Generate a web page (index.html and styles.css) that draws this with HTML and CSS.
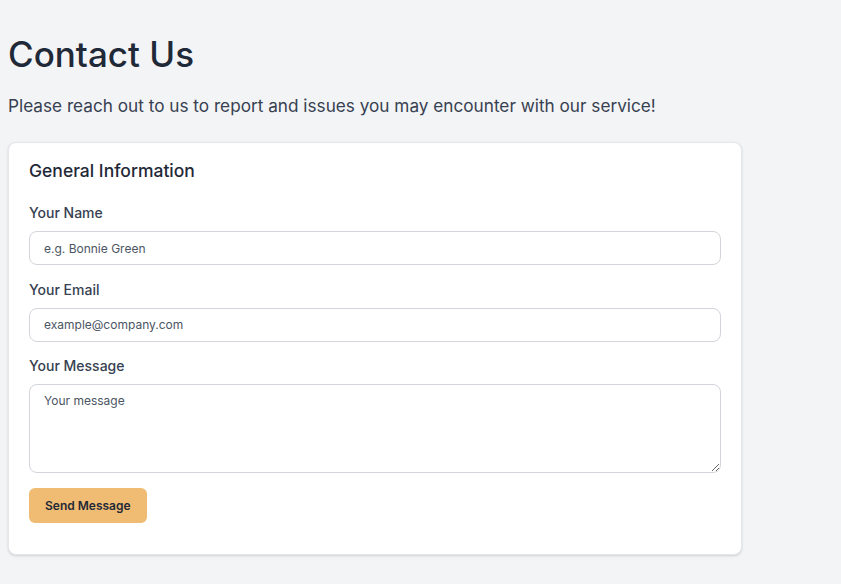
FILE: index.html
```html
<!DOCTYPE html>
<html>

<head>
    <title>Contact Us</title>
    <link rel="stylesheet" href="styles.css">
</head>

<body>
    <h1 class="page-title">Contact Us</h1>
    <p class="page-intro">Please reach out to us to report and issues you may encounter with our service!</p>

    <form class="contact-card" action="/contact" method="post">
        <h2 class="card-title">General Information</h2>

        <div class="field">
            <label for="name">Your Name</label>
            <input type="text" id="name" name="name" placeholder="e.g. Bonnie Green">
        </div>

        <div class="field">
            <label for="email">Your Email</label>
            <input type="email" id="email" name="email" placeholder="example@company.com">
        </div>

        <div class="field">
            <label for="message">Your Message</label>
            <textarea id="message" name="message" placeholder="Your message"></textarea>
        </div>

        <button type="submit" class="send-btn">Send Message</button>
    </form>
</body>

</html>
```

FILE: styles.css
```css
body {
    margin: 0;
    padding: 8px;
    font-family: Inter, "Noto Sans", sans-serif;
    background-color: #f3f4f6;
    color: #1f2937;
}

.page-title {
    margin: 26px 0 18px;
    font-size: 35px;
    line-height: 40px;
    font-weight: 500;
    color: #1f2937;
}

.page-intro {
    margin: 0 0 22px;
    font-size: 17.2px;
    line-height: 28px;
    color: #374151;
}

.contact-card {
    width: 734px;
    box-sizing: border-box;
    background-color: #fff;
    border: 1px solid #e5e7eb;
    border-radius: 8px;
    padding: 16px 20px 31px;
    box-shadow: 0 1px 3px rgba(0, 0, 0, 0.1), 0 1px 2px rgba(0, 0, 0, 0.05);
}

.card-title {
    margin: 0 0 20px;
    font-size: 17.5px;
    line-height: 24px;
    font-weight: 500;
    color: #1f2937;
}

.field {
    margin-bottom: 14.5px;
}

.field label {
    display: block;
    margin-bottom: 8px;
    font-size: 14px;
    line-height: 20px;
    font-weight: 500;
    color: #374151;
}

.field input,
.field textarea {
    display: block;
    width: 100%;
    box-sizing: border-box;
    border: 1px solid #d1d5db;
    border-radius: 8px;
    padding: 8px 14px;
    font-family: inherit;
    font-size: 12px;
    line-height: 16px;
    color: #1f2937;
    background-color: #fff;
}

.field input {
    height: 34px;
}

.field textarea {
    height: 89px;
}

.field input::placeholder,
.field textarea::placeholder {
    color: #4b5563;
}

.send-btn {
    background-color: #f0bc74;
    color: #1f2937;
    border: none;
    border-radius: 6px;
    padding: 0 16px;
    height: 35px;
    font-family: inherit;
    font-size: 12px;
    font-weight: 600;
    cursor: pointer;
}
```
